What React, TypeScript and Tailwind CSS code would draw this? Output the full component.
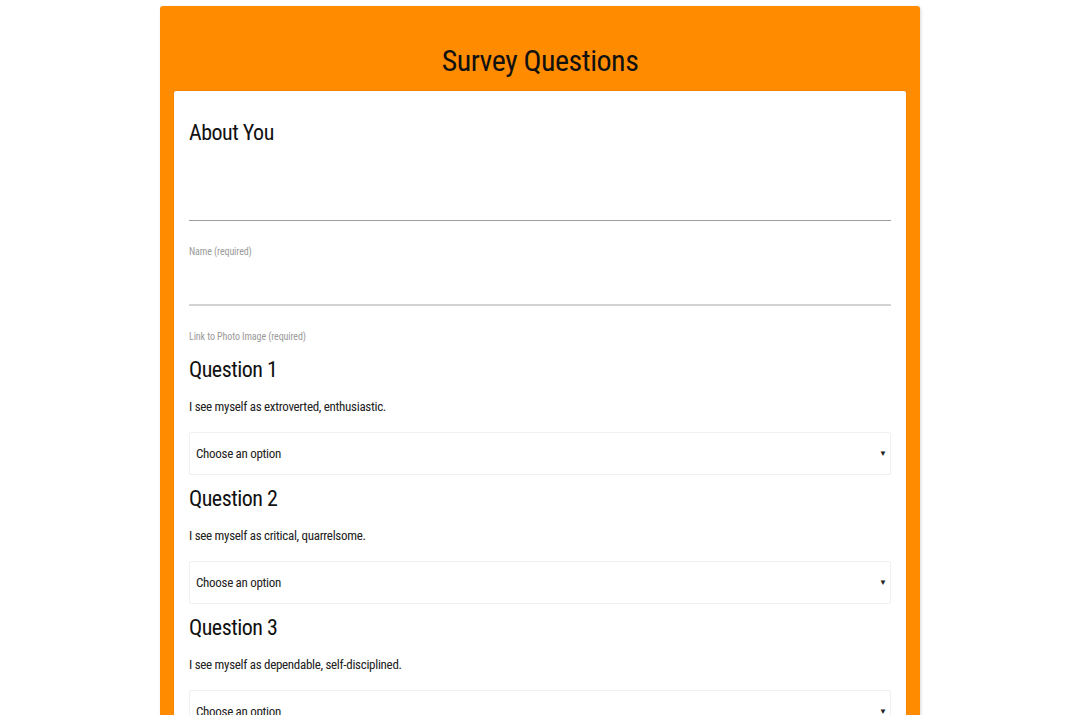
const questions = [
  { title: "Question 1", text: "I see myself as extroverted, enthusiastic." },
  { title: "Question 2", text: "I see myself as critical, quarrelsome." },
  { title: "Question 3", text: "I see myself as dependable, self-disciplined." },
  { title: "Question 4", text: "I see myself as anxious, easily upset." },
];

function SelectBox() {
  return (
    <div className="mt-[16px] flex h-[43px] items-center justify-between rounded-[2px] border border-[#f0f0f0] bg-white pl-[6px] pr-[3px]">
      <span className="text-[13px] tracking-[-0.3px] text-[#222]">Choose an option</span>
      <span className="text-[8px] text-[#222]">▼</span>
    </div>
  );
}

function App() {
  return (
    <div
      className="min-h-[715px] bg-white pt-[6px]"
      style={{ fontFamily: '"Roboto Condensed", "Roboto", "Liberation Sans", sans-serif', fontStretch: "condensed" }}
    >
      <div className="mx-auto w-[760px] rounded-[3px] bg-[#ff8c00] px-[14px] shadow-[1px_1px_3px_rgba(0,0,0,0.15)]">
        <h1 className="pt-[38px] pb-[13px] text-center text-[30px] leading-[34px] tracking-[-0.5px] text-[#111]">Survey Questions</h1>
        <div className="rounded-[2px] bg-white px-[15px] pt-[27px] pb-[40px] shadow-[0_0_2px_rgba(0,0,0,0.2)]">
          <h2 className="text-[22px] leading-[30px] tracking-[-0.5px] text-[#111]">About You</h2>

          <div className="mt-[72px] border-b border-[#9e9e9e]" />
          <div className="mt-[24px] text-[10px] leading-[14px] tracking-[-0.1px] text-[#9a9a9a]">Name (required)</div>

          <div className="mt-[45px] border-b-2 border-[#d3d3d3]" />
          <div className="mt-[24px] text-[10px] leading-[14px] tracking-[-0.1px] text-[#9a9a9a]">Link to Photo Image (required)</div>

          {questions.map((q, i) => (
            <div key={q.title} className={i === 0 ? "mt-[11px]" : "mt-[9px]"}>
              <h3 className="text-[22px] leading-[30px] tracking-[-0.5px] text-[#111]">{q.title}</h3>
              <p className="mt-[13px] text-[13px] leading-[18px] tracking-[-0.3px] text-[#222]">{q.text}</p>
              <SelectBox />
            </div>
          ))}
        </div>
      </div>
    </div>
  );
}

export default App;
